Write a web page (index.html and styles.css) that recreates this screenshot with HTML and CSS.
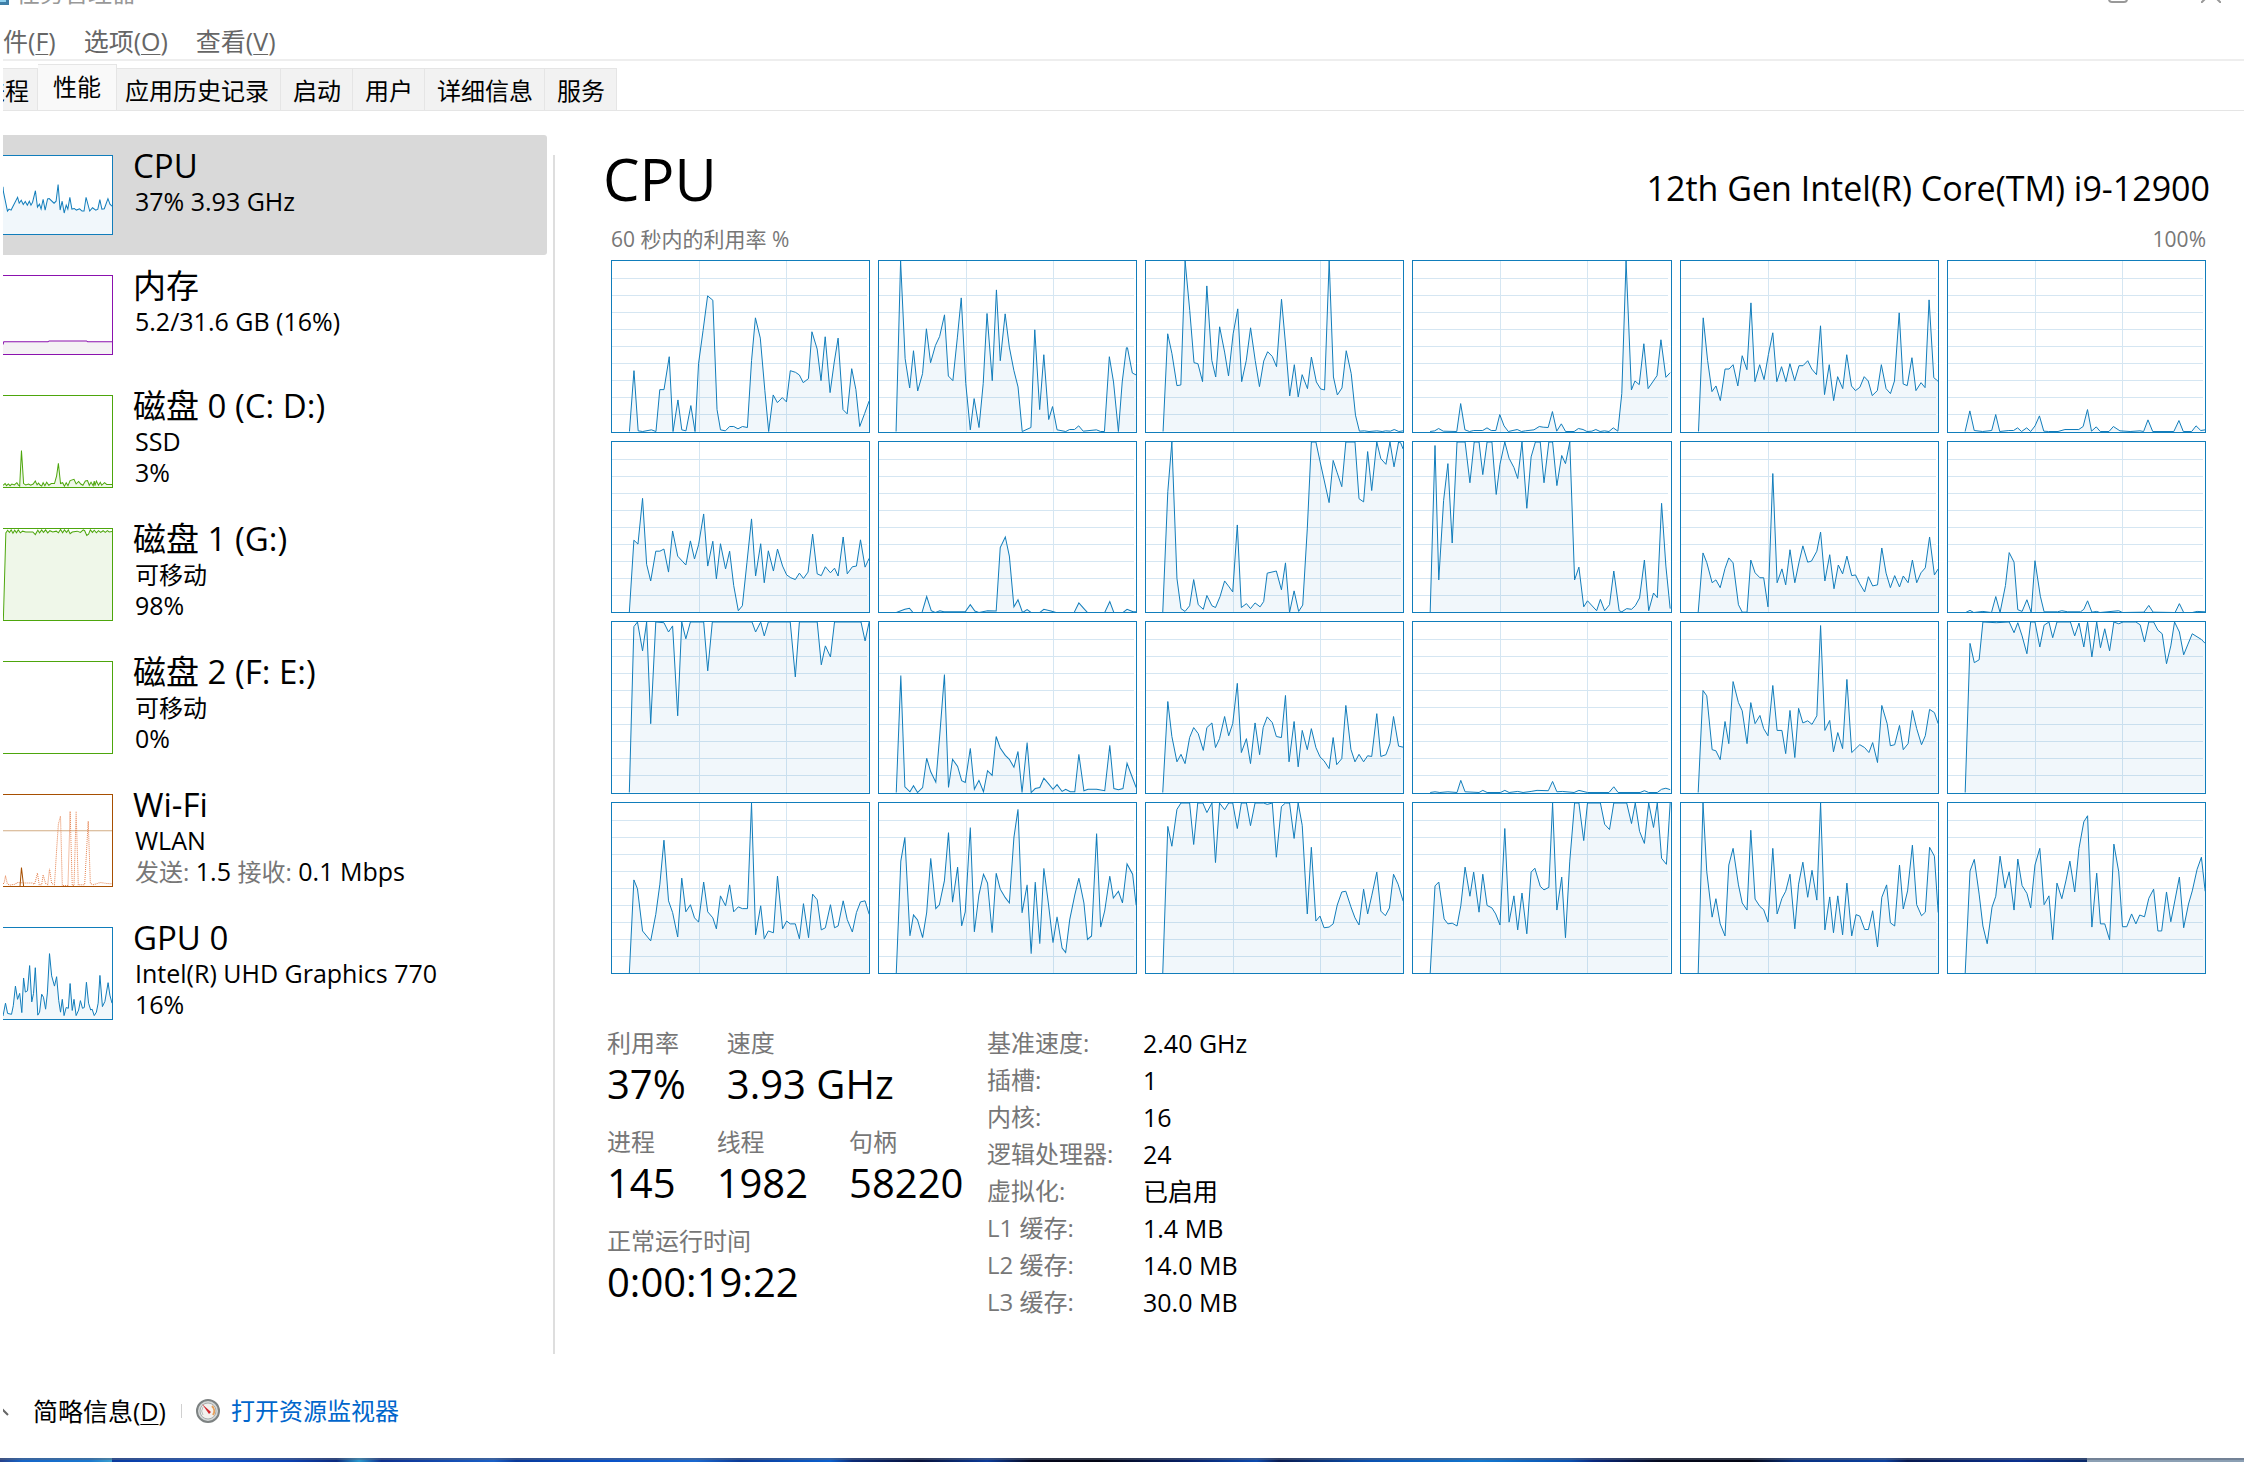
FILE: index.html
```html
<!DOCTYPE html>
<html lang="zh-CN">
<head>
<meta charset="utf-8">
<title>任务管理器</title>
<link rel="stylesheet" href="styles.css">
</head>
<body>
<div class="window">
  <header class="titlebar">
    <svg class="app-icon" width="16" height="24" viewBox="0 0 16 24" aria-hidden="true"><path d="M0 0h16v24H0z" fill="#3f7fa8"/><path d="M0 0h13v21H0z" fill="#8fd0ee"/></svg>
    <span class="window-title">任务管理器</span>
    <button class="caption-button" type="button" aria-label="最大化"><svg width="20" height="20" viewBox="0 0 20 20"><rect x="1" y="1" width="18" height="18" rx="3" fill="none" stroke="#999" stroke-width="2"/></svg></button>
    <button class="caption-button" type="button" aria-label="关闭"><svg width="20" height="20" viewBox="0 0 20 20"><path d="M0 0L20 20M20 0L0 20" fill="none" stroke="#999" stroke-width="2"/></svg></button>
  </header>

  <nav class="menubar" aria-label="菜单">
    <button type="button">文件(<u>F</u>)</button>
    <button type="button">选项(<u>O</u>)</button>
    <button type="button">查看(<u>V</u>)</button>
  </nav>

  <div class="tabs" role="tablist">
    <button type="button" role="tab">进程</button>
    <button type="button" role="tab" class="active" aria-selected="true">性能</button>
    <button type="button" role="tab">应用历史记录</button>
    <button type="button" role="tab">启动</button>
    <button type="button" role="tab">用户</button>
    <button type="button" role="tab">详细信息</button>
    <button type="button" role="tab">服务</button>
  </div>

  <div class="content">
    <aside class="sidebar">
      <button type="button" class="resource selected">
        <span class="thumb short blue" data-thumb="cpu"></span>
        <span class="resource-text"><span class="name">CPU</span><span class="sub">37% 3.93 GHz</span></span>
      </button>
      <button type="button" class="resource">
        <span class="thumb short purple" data-thumb="memory"></span>
        <span class="resource-text"><span class="name">内存</span><span class="sub">5.2/31.6 GB (16%)</span></span>
      </button>
      <button type="button" class="resource">
        <span class="thumb green" data-thumb="disk0"></span>
        <span class="resource-text"><span class="name">磁盘 0 (C: D:)</span><span class="sub">SSD</span><span class="sub">3%</span></span>
      </button>
      <button type="button" class="resource">
        <span class="thumb green" data-thumb="disk1"></span>
        <span class="resource-text"><span class="name">磁盘 1 (G:)</span><span class="sub kind">可移动</span><span class="sub">98%</span></span>
      </button>
      <button type="button" class="resource">
        <span class="thumb green"></span>
        <span class="resource-text"><span class="name">磁盘 2 (F: E:)</span><span class="sub kind">可移动</span><span class="sub">0%</span></span>
      </button>
      <button type="button" class="resource">
        <span class="thumb brown" data-thumb="wifi"></span>
        <span class="resource-text"><span class="name">Wi-Fi</span><span class="sub">WLAN</span><span class="sub"><span class="muted">发送:</span> 1.5 <span class="muted">接收:</span> 0.1 Mbps</span></span>
      </button>
      <button type="button" class="resource">
        <span class="thumb blue" data-thumb="gpu"></span>
        <span class="resource-text"><span class="name">GPU 0</span><span class="sub">Intel(R) UHD Graphics 770</span><span class="sub">16%</span></span>
      </button>
    </aside>

    <main class="detail">
      <div class="detail-head">
        <h1>CPU</h1>
        <p class="model">12th Gen Intel(R) Core(TM) i9-12900</p>
      </div>
      <div class="chart-caption"><span>60 秒内的利用率 %</span><span>100%</span></div>
      <div class="chart-grid" id="cores"></div>

      <div class="stats">
        <div class="counters">
          <dl><div><dt>利用率</dt><dd>37%</dd></div><div><dt>速度</dt><dd>3.93 GHz</dd></div></dl>
          <dl><div><dt>进程</dt><dd>145</dd></div><div><dt>线程</dt><dd>1982</dd></div><div><dt>句柄</dt><dd>58220</dd></div></dl>
          <dl><div><dt>正常运行时间</dt><dd>0:00:19:22</dd></div></dl>
        </div>
        <table class="facts">
          <tr><th scope="row">基准速度:</th><td>2.40 GHz</td></tr>
          <tr><th scope="row">插槽:</th><td>1</td></tr>
          <tr><th scope="row">内核:</th><td>16</td></tr>
          <tr><th scope="row">逻辑处理器:</th><td>24</td></tr>
          <tr><th scope="row">虚拟化:</th><td>已启用</td></tr>
          <tr><th scope="row">L1 缓存:</th><td>1.4 MB</td></tr>
          <tr><th scope="row">L2 缓存:</th><td>14.0 MB</td></tr>
          <tr><th scope="row">L3 缓存:</th><td>30.0 MB</td></tr>
        </table>
      </div>
    </main>
  </div>

  <footer class="footer">
    <button type="button" class="fewer"><svg width="18" height="10" viewBox="0 0 18 10" aria-hidden="true"><path d="M1 9L9 1L17 9" fill="none" stroke="#666" stroke-width="2"/></svg><span>简略信息(<u>D</u>)</span></button>
    <a href="#monitor" class="monitor"><svg width="24" height="24" viewBox="0 0 24 24" aria-hidden="true"><circle cx="12" cy="12" r="11" fill="#d4d8d8" stroke="#7d8282" stroke-width="2"/><circle cx="12" cy="12" r="8" fill="#f3f1ee" stroke="#a9adad"/><path d="M16 7a7 7 0 0 1 1 9" fill="none" stroke="#e8a05a" stroke-width="2"/><path d="M7 16a7 7 0 0 1 0-8" fill="none" stroke="#b9bcbc" stroke-width="1"/><path d="M6 5L15 13L13 15Z" fill="#d0242c"/></svg><span>打开资源监视器</span></a>
  </footer>
  <div class="desktop-edge"></div>
</div>
<script src="charts.js"></script>
</body>
</html>
```
FILE: styles.css
```css
* { box-sizing: border-box; }
body {
  margin: 0;
  background: #fff;
  color: #000;
  font: 24px/32px "Open Sans", "Noto Sans CJK SC", sans-serif;
}
button {
  margin: 0;
  padding: 0;
  border: 0;
  background: none;
  color: inherit;
  font: inherit;
  text-align: left;
}
h1, p, dl, dd { margin: 0; }
u { text-underline-offset: 3px; text-decoration-thickness: 1px; }

.window {
  display: flex;
  flex-direction: column;
  min-height: 100vh;
  overflow: hidden;
}

.titlebar {
  display: flex;
  align-items: center;
  height: 32px;
  margin-top: -23px;
  padding: 0 23px 0 0;
  color: #999;
}
.app-icon { margin-left: -7px; }
.window-title { flex: 1; margin-left: 7px; }
.caption-button { display: flex; margin-left: 73px; }

.menubar {
  display: flex;
  gap: 28px;
  margin-left: 3px;
  padding: 14px 0 0;
  height: 52px;
  line-height: 36px;
  border-bottom: 2px solid #eee;
  color: #666;
  font-size: 25px;
  overflow: hidden;
}
.menubar button:first-child { margin-left: -25px; }

.tabs {
  display: flex;
  align-items: flex-end;
  height: 50px;
  margin-left: 3px;
  border-bottom: 1px solid #e5e5e5;
  overflow: hidden;
}
.tabs button {
  height: 42px;
  padding: 2px 11px 0 12px;
  border: solid #e5e5e5;
  border-width: 1px 1px 0 0;
  background: #f2f2f2;
}
.tabs button:first-child { margin-left: -34px; padding-right: 8px; }
.tabs .active {
  height: 46px;
  padding: 0 15px 2px;
  background: #f9f9f9;
}
.tabs .active + button { padding-left: 8px; }

.content { display: flex; flex: 1; }
.sidebar {
  width: 547px;
  padding: 24px 0 0 3px;
}
.resource {
  display: flex;
  width: 100%;
  padding: 0 0 20px;
}
.resource.selected { background: #d9d9d9; border-radius: 0 3px 3px 0; }
.thumb {
  display: block;
  width: 110px;
  height: 93px;
  margin: 20px 20px 0 0;
  border: 1px solid;
  border-left: 0;
  background: #fff;
}
.thumb.short { height: 80px; }
.thumb svg, .chart svg { display: block; width: 100%; height: 100%; }
.blue, .chart { --line: #117dbb; --fill: rgba(17, 125, 187, .06); }
.purple { --line: #8b12ae; --fill: #f4f2f4; }
.green { --line: #4da60c; --fill: #eff7e9; }
.brown { --line: #a74f01; --fill: none; }
.thumb { border-color: var(--line); }
.resource-text { display: flex; flex-direction: column; padding-top: 10px; }
.name { font-size: 33px; line-height: 41px; }
.sub { padding-left: 2px; font-size: 25px; line-height: 31px; }
.kind, .muted { font-size: 24px; }
.muted { color: #777; }

.line { fill: none; stroke: var(--line); vector-effect: non-scaling-stroke; }
.area { fill: var(--fill); }
.dotted { fill: none; stroke: #e5824f; stroke-dasharray: 1 1; vector-effect: non-scaling-stroke; }
.average { stroke: #d2ad84; vector-effect: non-scaling-stroke; }
.rule { stroke: #d5e6f2; shape-rendering: crispEdges; }

.detail {
  display: flex;
  flex: 1;
  flex-direction: column;
  min-width: 0;
  padding: 28px 34px 31px 56px;
  position: relative;
}
.detail::before {
  content: "";
  position: absolute;
  top: 44px;
  bottom: 0;
  left: 6px;
  width: 2px;
  background: #dedede;
}
.detail-head {
  display: flex;
  align-items: baseline;
  justify-content: space-between;
}
h1 { font-size: 58px; font-weight: 400; line-height: 80px; }
.model { font-size: 34px; line-height: 40px; }
.chart-caption {
  display: flex;
  justify-content: space-between;
  padding: 0 4px 0 8px;
  color: #777;
  font-size: 21px;
  line-height: 41px;
}
.chart-grid {
  display: grid;
  flex: 1;
  grid-template-columns: repeat(6, 1fr);
  grid-template-rows: repeat(4, 1fr);
  gap: 8px;
  padding: 0 4px 0 8px;
}
.chart { min-height: 0; border: 1px solid var(--line); overflow: hidden; position: relative; }
.chart svg.plot { position: absolute; inset: 0; }

.stats { display: flex; align-items: flex-start; padding: 50px 0 0 4px; }
.counters { width: 380px; padding-top: 2px; }
.counters dl { display: flex; gap: 41px; height: 99px; }
dt { color: #777; line-height: 34px; }
dd { font-size: 40px; line-height: 48px; }
.facts { border-collapse: collapse; }
.facts th, .facts td { height: 37px; padding: 0; line-height: 32px; font-weight: 400; text-align: left; }
.facts th { width: 156px; min-width: 156px; color: #777; }
.facts td { font-size: 25px; }

.footer {
  display: flex;
  align-items: center;
  height: 104px;
  padding-top: 10px;
  margin-left: 3px;
  overflow: hidden;
}
.fewer {
  display: flex;
  align-items: center;
  gap: 24px;
  margin-left: -12px;
  padding-right: 15px;
  font-size: 25px;
}
.monitor {
  display: flex;
  align-items: center;
  gap: 11px;
  padding-left: 15px;
  color: #0066cc;
  text-decoration: none;
  background: linear-gradient(#d0d0d0, #d0d0d0) left center / 1px 14px no-repeat;
}
.desktop-edge {
  height: 4px;
  background:
    linear-gradient(rgba(90, 100, 120, .5), rgba(90, 100, 120, .5)) top / 100% 2px no-repeat,
    linear-gradient(90deg, #27408a 0, #1565c8 1%, #1a78d0 4%, #3aa0d0 5%, #0a3a9e 5%, #0a50d0 9%, #0a3fb0 13%, #0a2a80 15%, #2a9ad0 16%, #0c2f90 17%, #1a60c8 22%, #08389a 23%, #0850c8 27%, #1a68d0 31%, #0a3a98 33%, #0a60d0 37%, #0a2a78 38%, #06103a 41%, #0a3a9a 44%, #04061c 46%, #020412 49%, #06206a 53%, #0b4ab0 56%, #081a50 57%, #0a50b0 61%, #1278d0 66%, #0a50b0 70%, #082880 71%, #04081c 74%, #020412 78%, #083080 80%, #0a40a0 84%, #061850 85%, #0a3090 90%, #082868 93%, #8ca0b4 93%, #8ca0b4 100%);
}
```
FILE: charts.js
```js
// Each entry: view box of the plot, then the trace as x,y pairs.
const cores = [
["32 391 737 513", "82,904 95,721 107,902 120,904 145,899 158,904 169,778 181,778 196,679 207,904 221,809 232,899 244,902 258,826 270,904 280,700 293,600 306,496 321,509 333,838 343,899 357,902 369,889 381,889 393,896 406,889 420,892 432,690 443,562 457,623 470,780 481,904 494,794 506,817 520,802 532,815 543,721 558,726 569,734 580,757 595,745 605,604 620,656 631,751 643,619 657,787 669,695 680,623 694,838 706,851 719,715 731,778 742,889 756,850 769,812"],
["794 391 738 513", "843,904 856,391 869,685 882,773 893,661 905,782 919,730 930,595 942,697 956,645 968,618 982,553 993,737 1006,751 1019,620 1030,502 1043,760 1056,899 1067,805 1081,892 1093,760 1104,549 1119,751 1131,478 1142,691 1156,550 1168,650 1181,720 1193,770 1205,904 1230,892 1241,598 1255,838 1267,673 1281,868 1292,829 1305,899 1330,904 1341,898 1355,898 1367,887 1380,903 1418,899 1430,904 1441,904 1455,679 1467,755 1481,904 1492,755 1504,652 1507,652 1521,728 1532,734"],
["46 391 723 513", "94,904 107,610 119,670 133,766 144,764 156,391 169,540 181,697 192,700 205,754 217,466 231,690 242,740 253,589 267,665 278,737 291,610 304,535 315,754 328,690 340,592 353,690 365,769 377,692 388,664 401,678 413,709 427,506 439,650 450,797 463,703 474,800 485,733 500,775 511,680 525,755 537,776 548,779 561,391 573,740 584,794 597,773 609,661 623,730 635,855 646,903 660,902 673,904 695,902 710,904 720,902 733,903 744,898 757,904 769,902"],
["794 391 723 513", "842,904 855,902 866,895 879,903 917,904 928,820 940,899 953,904 965,901 990,901 1002,893 1014,901 1027,901 1038,853 1050,887 1062,904 1087,898 1099,904 1110,902 1134,899 1149,889 1160,891 1174,892 1186,844 1198,903 1211,881 1223,904 1247,904 1259,895 1272,898 1283,904 1297,903 1308,898 1320,904 1332,902 1345,904 1357,893 1370,903 1381,790 1393,391 1408,779 1418,752 1430,763 1443,640 1455,775 1480,736 1491,628 1505,741 1517,727"],
["28 391 706 513", "76,904 89,562 101,690 113,784 124,767 136,811 149,716 160,716 171,703 184,767 196,676 209,718 220,517 231,754 244,703 256,748 268,672 280,607 291,754 304,709 316,754 327,700 340,751 352,706 363,706 376,691 387,716 400,733 411,586 422,793 435,703 447,811 458,739 472,775 483,673 496,767 507,781 519,771 531,739 542,752 553,796 567,781 578,703 591,775 603,790 614,752 627,547 638,761 649,766 662,682 673,781 687,757 698,772 709,508 722,742 734,753"],
["758 391 706 513", "805,904 818,842 830,901 853,904 878,901 889,853 900,904 925,901 938,901 949,893 960,904 974,893 985,904 997,887 1009,857 1021,903 1034,904 1060,904 1079,898 1117,898 1129,889 1141,838 1152,903 1165,890 1176,904 1200,904 1212,889 1230,902 1258,904 1285,902 1295,904 1307,869 1320,904 1378,904 1392,871 1404,904 1427,904 1439,887 1452,901 1464,899"],

["23 30 505 481", "57,511 66,307 74,318 83,189 91,375 99,422 109,338 117,338 125,332 134,397 142,281 152,352 168,377 177,309 185,360 193,320 203,233 211,380 221,310 228,416 236,317 246,388 254,338 262,435 271,506 279,492 288,370 297,247 305,408 315,317 322,427 330,337 340,394 348,332 358,380 366,405 374,413 383,418 391,400 399,415 408,397 417,290 426,402 434,407 442,382 452,399 460,386 467,408 477,298 485,402 495,382 503,380 511,306 520,383 528,358"],
["546 30 507 481", "580,511 597,502 606,499 613,511 631,510 640,466 649,506 657,511 666,506 674,509 716,509 726,489 735,507 743,511 760,506 777,507 785,328 795,298 803,352 812,495 820,475 829,511 838,503 846,511 863,511 871,502 885,507 895,511 931,510 940,484 950,500 957,511 991,511 1001,480 1009,511 1027,511 1035,502 1047,509 1053,509"],
["1071 30 507 481", "1104,511 1114,170 1122,30 1132,415 1140,500 1148,508 1157,492 1165,418 1174,489 1184,502 1191,463 1201,492 1208,497 1217,466 1226,422 1235,439 1242,453 1251,264 1259,497 1269,486 1277,500 1286,484 1296,495 1303,480 1310,400 1328,394 1338,447 1346,371 1354,511 1363,450 1372,508 1380,490 1389,275 1397,30 1406,30 1414,84 1432,201 1440,82 1448,117 1457,156 1465,30 1483,30 1491,190 1500,199 1508,57 1516,167 1526,30 1534,77 1544,93 1552,30 1560,100 1569,30 1573,32 1578,50"],
["25 30 479 481", "57,511 66,40 73,419 82,195 90,91 98,315 107,30 122,30 131,145 139,30 148,30 155,122 163,30 172,30 180,178 187,93 196,30 204,76 213,102 220,133 228,30 237,217 245,72 253,30 262,30 269,145 278,30 285,30 293,153 302,68 309,91 317,30 326,419 334,383 343,495 350,478 367,506 374,474 382,506 391,489 399,394 409,506 414,509 423,500 432,502 439,492 447,470 456,363 464,506 473,456 480,469 488,203 496,380 504,500"],
["521 30 479 481", "553,511 562,343 569,370 579,427 586,419 594,441 603,387 610,357 618,371 628,489 635,510 644,510 651,363 659,399 668,413 675,413 683,495 692,119 700,427 709,388 716,433 724,334 733,427 741,368 748,323 757,369 764,366 774,338 781,284 789,422 798,348 806,444 814,377 822,402 830,352 839,407 846,405 854,430 863,453 870,410 878,436 887,433 895,329 903,400 911,441 919,407 928,439 935,408 944,427 952,363 960,427 968,399 976,385 984,298 993,405 1000,388"],
["1017 30 479 481", "1050,511 1058,505 1065,511 1082,508 1098,511 1106,466 1114,511 1124,435 1131,342 1140,369 1147,503 1155,508 1164,475 1172,511 1179,365 1189,465 1196,509 1221,509 1229,506 1240,509 1264,509 1270,502 1277,478 1285,510 1294,508 1300,511 1335,506 1342,511 1382,510 1391,491 1399,510 1440,511 1448,486 1456,511 1472,511 1481,508 1496,509"],

["23 537 505 478", "57,1015 66,550 73,537 83,618 91,537 99,822 109,537 125,539 134,565 142,548 152,800 160,537 168,584 177,537 203,537 211,674 220,537 298,537 305,565 315,537 322,576 330,537 373,537 383,691 391,537 426,537 434,657 442,604 452,635 460,537 512,537 520,590 528,537"],
["546 537 507 478", "580,1015 589,687 597,999 607,1013 614,996 622,1015 632,1001 640,919 648,957 658,986 666,850 675,684 683,1001 691,922 701,942 709,982 716,987 726,891 734,1006 743,981 752,1013 760,954 769,967 777,858 785,890 795,911 803,922 812,944 820,900 828,1015 838,875 846,1015 854,1004 863,1001 871,975 880,990 889,1006 897,993 907,1012 914,1006 923,1013 932,1013 940,908 950,1010 958,1006 975,1006 991,1010 1001,883 1009,1004 1018,1007 1027,1004 1035,933 1046,975 1053,1001"],
["1071 537 507 478", "1104,1015 1114,760 1122,858 1132,929 1140,908 1148,934 1157,861 1165,833 1174,850 1184,897 1191,833 1201,820 1208,889 1216,864 1226,802 1234,856 1242,822 1251,709 1259,903 1269,864 1277,934 1286,820 1295,909 1302,833 1310,803 1320,819 1328,858 1338,861 1346,743 1353,929 1363,816 1371,943 1379,841 1389,895 1397,836 1406,889 1414,915 1422,926 1432,948 1440,861 1447,937 1457,920 1465,771 1475,894 1483,929 1491,908 1500,929 1508,912 1516,914 1526,794 1534,914 1544,909 1552,878 1559,802 1569,885 1578,888"],
["25 537 479 478", "57,1015 66,1013 75,1015 90,1013 107,1015 114,981 122,1013 148,1015 155,1009 163,1015 188,1015 196,1009 204,1015 220,1012 230,1015 245,1012 256,1009 277,1010 285,984 293,1013 303,1012 325,1015 334,1009 350,1015 390,1015 399,999 407,1015 448,1015 456,1010 464,1015 480,1015 488,1006 496,1003 504,1007"],
["521 537 479 478", "553,1015 562,729 569,744 579,895 586,898 594,923 603,816 610,878 618,704 628,763 635,786 644,878 651,763 659,822 668,799 675,836 683,856 692,715 700,841 709,841 716,906 724,785 733,917 740,779 748,820 757,814 765,824 774,800 781,547 789,841 798,813 805,901 813,847 822,892 830,698 839,903 854,881 863,889 871,903 878,875 887,931 895,771 905,822 911,884 919,881 928,827 935,895 944,878 952,785 960,836 969,881 976,856 984,782 993,791 1000,822"],
["1017 537 479 478", "1049,1015 1058,597 1066,651 1075,643 1082,537 1107,539 1131,537 1140,567 1147,539 1155,576 1164,626 1171,537 1179,537 1188,607 1196,546 1205,537 1212,581 1220,537 1245,537 1253,576 1261,540 1270,607 1277,537 1285,635 1294,537 1301,609 1309,556 1318,618 1326,537 1335,542 1343,537 1367,537 1375,545 1383,593 1391,537 1400,537 1408,560 1416,570 1424,654 1432,604 1439,537 1448,565 1456,629 1464,599 1472,570 1489,586 1496,597"],

["23 1041 505 481", "57,1522 66,1258 73,1283 83,1402 99,1430 109,1355 117,1270 125,1146 134,1317 142,1350 152,1419 160,1253 168,1348 177,1328 185,1365 193,1377 203,1264 211,1348 221,1365 228,1396 236,1303 246,1331 254,1272 262,1348 271,1334 279,1339 289,1339 297,1041 305,1413 315,1331 322,1424 330,1402 340,1407 348,1247 358,1396 366,1374 373,1382 383,1382 391,1424 399,1325 409,1421 417,1298 426,1314 434,1399 442,1393 452,1328 460,1393 467,1388 477,1317 485,1370 495,1405 503,1350 511,1320 520,1317 528,1355"],
["546 1041 507 481", "580,1522 589,1205 597,1138 607,1416 614,1357 622,1371 632,1421 640,1350 648,1197 658,1339 665,1328 675,1260 683,1124 691,1321 701,1222 709,1388 716,1348 726,1110 734,1405 743,1300 752,1242 760,1267 769,1407 777,1239 785,1284 795,1308 803,1323 812,1138 820,1059 828,1351 838,1272 846,1466 854,1264 863,1438 871,1225 880,1325 889,1435 897,1362 907,1450 914,1463 922,1370 932,1300 940,1253 950,1323 957,1426 965,1416 975,1127 983,1391 991,1345 1001,1247 1008,1309 1018,1290 1026,1323 1035,1213 1046,1242 1053,1330"],
["1071 1041 507 481", "1104,1522 1114,1107 1122,1163 1132,1059 1140,1041 1157,1041 1165,1158 1173,1041 1183,1041 1191,1068 1201,1041 1208,1209 1216,1041 1226,1060 1234,1041 1242,1041 1251,1113 1259,1041 1269,1041 1277,1105 1286,1041 1303,1041 1310,1045 1320,1041 1328,1194 1338,1051 1346,1041 1354,1041 1363,1141 1371,1041 1379,1104 1389,1354 1397,1166 1406,1374 1414,1360 1422,1393 1432,1391 1440,1382 1448,1329 1457,1292 1465,1290 1475,1334 1483,1365 1491,1385 1500,1284 1508,1354 1516,1303 1526,1236 1534,1346 1543,1359 1551,1337 1559,1242 1568,1270 1578,1318"],
["25 1041 479 481", "57,1522 66,1275 73,1264 83,1368 90,1382 98,1380 107,1388 114,1331 122,1222 131,1304 138,1236 148,1349 155,1242 163,1330 172,1337 179,1354 187,1385 196,1113 204,1377 213,1303 220,1399 228,1295 237,1410 245,1236 252,1225 262,1276 269,1286 278,1279 285,1041 293,1343 302,1250 309,1421 317,1205 326,1041 334,1041 343,1147 350,1041 374,1041 382,1101 391,1116 399,1041 423,1041 432,1099 439,1041 447,1121 456,1155 464,1041 473,1110 480,1041 488,1197 497,1214 504,1041"],
["521 1041 479 481", "553,1522 562,1041 569,1235 579,1363 586,1311 594,1382 603,1416 610,1216 618,1169 628,1272 635,1323 644,1343 651,1118 659,1312 668,1333 675,1342 683,1377 692,1169 700,1354 709,1310 716,1290 724,1242 733,1396 740,1270 748,1208 757,1307 765,1231 774,1315 781,1041 789,1399 798,1306 805,1407 813,1303 822,1413 830,1267 839,1416 847,1356 854,1360 863,1398 870,1398 878,1345 887,1447 895,1307 904,1272 911,1379 919,1388 928,1216 935,1340 943,1289 952,1160 960,1328 969,1359 976,1349 984,1166 993,1191 1000,1350"],
["1017 1041 479 481", "1049,1522 1058,1233 1066,1200 1075,1298 1082,1388 1090,1438 1099,1335 1106,1304 1114,1191 1123,1281 1131,1235 1140,1343 1147,1199 1155,1274 1164,1296 1171,1337 1179,1216 1188,1169 1196,1328 1205,1303 1212,1427 1220,1267 1229,1311 1237,1258 1244,1205 1253,1292 1261,1169 1270,1094 1277,1077 1285,1391 1294,1239 1301,1382 1309,1382 1318,1427 1326,1157 1335,1235 1342,1390 1350,1390 1359,1354 1367,1382 1374,1357 1383,1362 1391,1310 1400,1284 1408,1402 1415,1402 1424,1292 1432,1376 1448,1250 1456,1393 1465,1326 1472,1289 1481,1228 1489,1194 1496,1290"]
];

const thumbs = {
cpu: ["7 466 269 238", "7,560 8,575 18,634 22,628 27,631 43,592 47,610 52,601 57,614 62,605 67,616 72,604 76,616 80,607 87,572 92,622 97,613 101,628 106,598 111,631 117,597 121,596 133,610 138,604 143,553 148,631 153,604 158,640 163,616 167,628 172,592 177,628 183,626 188,631 196,627 202,634 207,634 212,592 221,634 228,624 236,631 241,628 246,599 251,628 257,627 266,596 271,613 276,619"],
memory: ["7 826 269 238", "7,1035 9,1027 118,1027 121,1024 213,1024 216,1027 276,1027"],
disk0: ["8 82 307 212", "8,290 14,286 18,291 23,287 28,291 33,287 40,289 47,284 51,289 55,292 60,209 66,286 72,289 80,287 86,290 93,287 99,280 104,289 108,285 113,290 117,292 121,284 126,291 131,283 137,290 144,286 153,286 159,268 164,239 170,286 176,284 181,292 186,284 191,291 197,279 208,276 214,287 221,281 227,287 233,290 240,280 246,279 251,290 256,283 262,291 265,280 267,291 271,280 277,290 282,283 286,290 294,284 300,288 315,288"],
disk1: ["8 389 307 212", "9,601 16,398 21,392 26,397 31,391 36,399 41,392 46,398 51,391 57,398 63,394 72,396 92,396 99,402 106,392 111,398 117,391 122,397 128,391 134,398 140,393 148,396 158,394 164,398 170,390 176,398 181,391 187,397 192,391 197,400 203,396 217,394 226,397 234,391 238,393 244,404 249,401 254,391 260,397 265,392 271,398 277,393 283,397 290,393 296,397 302,393 307,396 315,395"],
wifi: ["8 1002 307 212", "56,1214 60,1171 66,1214"],
gpu: ["8 1308 307 213", "8,1514 15,1484 21,1508 32,1510 37,1490 43,1444 49,1475 55,1461 61,1506 66,1425 71,1458 77,1455 83,1396 89,1481 94,1461 99,1401 106,1512 111,1505 117,1463 122,1470 128,1498 133,1460 139,1368 145,1420 153,1444 159,1422 165,1478 170,1505 175,1475 180,1513 186,1494 192,1496 197,1438 203,1501 208,1475 214,1513 221,1500 226,1478 232,1496 237,1494 243,1435 249,1484 255,1500 259,1498 265,1513 271,1505 276,1484 281,1419 288,1492 295,1480 304,1436 309,1465 315,1484"]
};
const wifiReceive = "8,1208 11,1208 15,1190 20,1208 26,1212 40,1210 50,1206 70,1207 90,1207 97,1210 105,1184 110,1211 117,1211 121,1188 128,1208 134,1211 139,1174 145,1208 153,1211 159,1130 164,1070 170,1051 175,1213 191,1213 197,1040 203,1213 208,1213 214,1040 220,1211 238,1211 248,1063 254,1208 262,1211 282,1206 300,1208 315,1209";

function plot([view, points], extra = "") {
  const [, top, , height] = view.split(" ").map(Number);
  const pairs = points.split(" ");
  const base = top + height;
  const first = pairs[0].split(",")[0];
  const last = pairs[pairs.length - 1].split(",")[0];
  return `<svg class="plot" viewBox="${view}" preserveAspectRatio="none" aria-hidden="true">` +
    `<polygon class="area" points="${first},${base} ${points} ${last},${base}"/>` +
    `${extra}<polyline class="line" points="${points}"/></svg>`;
}

function rules() {
  let out = "";
  for (let i = 1; i < 10; i++) out += `<line class="rule" x1="0" x2="99%" y1="${i * 10}%" y2="${i * 10}%"/>`;
  for (const x of [34, 68]) out += `<line class="rule" x1="${x}%" x2="${x}%" y1="0" y2="100%"/>`;
  return `<svg aria-hidden="true">${out}</svg>`;
}

document.getElementById("cores").innerHTML =
  cores.map(core => `<div class="chart">${rules()}${plot(core)}</div>`).join("");

document.querySelectorAll("[data-thumb]").forEach(el => {
  const id = el.dataset.thumb;
  const extra = id === "wifi"
    ? `<line class="average" x1="8" x2="315" y1="1085" y2="1085"/><polyline class="dotted" points="${wifiReceive}"/>`
    : "";
  el.innerHTML = plot(thumbs[id], extra);
});
```
